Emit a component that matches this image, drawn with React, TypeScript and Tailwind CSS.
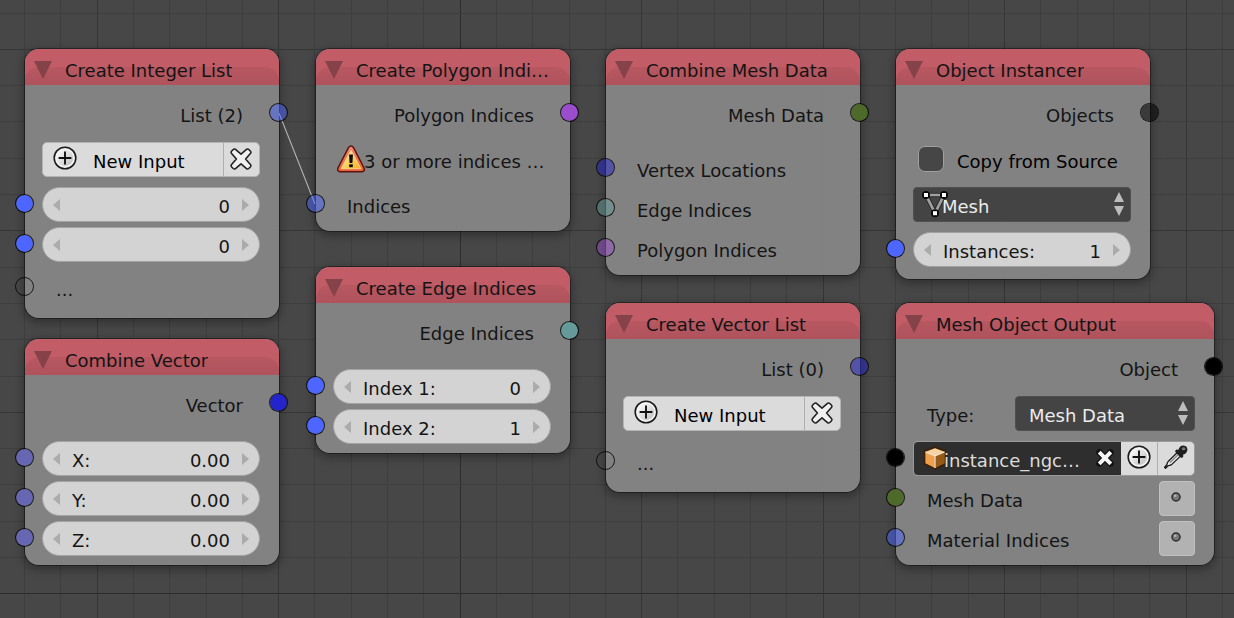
import { useId, useState, type ReactNode } from "react";

/* ---------- icons ---------- */

function PlusIcon() {
  return (
    <svg width="24" height="24" viewBox="0 0 24 24" aria-hidden="true" className="shrink-0">
      <defs>
        <linearGradient id="plus-disc" x1="0" y1="0" x2="1" y2="1">
          <stop offset="0" stopColor="#ffffff" />
          <stop offset="1" stopColor="#bcbcbc" />
        </linearGradient>
      </defs>
      <circle cx="12" cy="12" r="10.8" fill="#f4f4f4" stroke="#1c1c1c" strokeWidth="1.6" />
      <circle cx="12" cy="12" r="8.2" fill="url(#plus-disc)" />
      <path d="M12 5.6V18.4M5.6 12H18.4" stroke="#111" strokeWidth="1.9" fill="none" />
    </svg>
  );
}

function CrossIcon() {
  return (
    <svg width="24" height="24" viewBox="0 0 24 24" aria-hidden="true" className="shrink-0">
      <path
        d="M6.2 2.2 12 7.2 17.8 2.2Q18.8 1.6 19.8 2.5L21.5 4.2Q22.4 5.2 21.6 6.2L16.6 12 21.6 17.8Q22.4 18.8 21.5 19.8L19.8 21.5Q18.8 22.4 17.8 21.8L12 16.8 6.2 21.8Q5.2 22.4 4.2 21.5L2.5 19.8Q1.6 18.8 2.4 17.8L7.4 12 2.4 6.2Q1.6 5.2 2.5 4.2L4.2 2.5Q5.2 1.6 6.2 2.2Z"
        fill="#f0f0f0"
        stroke="#222"
        strokeWidth="1.6"
        strokeLinejoin="round"
      />
    </svg>
  );
}

function SmallCrossIcon() {
  return (
    <svg width="20" height="20" viewBox="0 0 20 20" aria-hidden="true" className="shrink-0">
      <path d="M4.4 4.4 15.6 15.6M15.6 4.4 4.4 15.6" stroke="#111" strokeWidth="6.4" strokeLinecap="round" />
      <path d="M4.2 4.2 15.8 15.8M15.8 4.2 4.2 15.8" stroke="#f4f4f4" strokeWidth="4" />
    </svg>
  );
}

function WarningIcon() {
  return (
    <svg width="30" height="28" viewBox="0 0 30 29" preserveAspectRatio="none" aria-hidden="true" className="shrink-0">
      <defs>
        <linearGradient id="warn-outer" x1="0" y1="0" x2="0" y2="1">
          <stop offset="0" stopColor="#f58a70" />
          <stop offset="1" stopColor="#e8612a" />
        </linearGradient>
        <linearGradient id="warn-inner" x1="0" y1="0" x2="1" y2="1">
          <stop offset="0" stopColor="#fff3a8" />
          <stop offset="1" stopColor="#f2b21e" />
        </linearGradient>
      </defs>
      <path
        d="M12.6 2.6Q15 -0.4 17.4 2.6L28.2 24Q29 27.4 26 27.8H4Q1 27.4 1.8 24Z"
        fill="url(#warn-outer)"
        stroke="#5a1414"
        strokeWidth="1.5"
      />
      <path d="M15 5.6 24.9 24.6H5.1Z" fill="url(#warn-inner)" stroke="#ffd9a0" strokeWidth="0.9" strokeLinejoin="round" />
      <path d="M13 9.8H17L16.4 18.6H13.6Z" fill="#0d0d0d" />
      <rect x="13.2" y="20" width="3.6" height="3" fill="#0d0d0d" />
    </svg>
  );
}

function MeshIcon() {
  return (
    <svg width="28" height="28" viewBox="0 0 28 28" aria-hidden="true" className="shrink-0">
      <path d="M5 5H23L14 23Z" fill="none" stroke="#2a2a2a" strokeWidth="4.6" strokeLinejoin="round" />
      <path d="M5 5H23L14 23Z" fill="none" stroke="#a0a0a0" strokeWidth="2.7" />
      <g fill="#080808">
        <circle cx="5" cy="5" r="4" />
        <circle cx="23" cy="5" r="4" />
        <circle cx="14" cy="23.2" r="4" />
      </g>
      <g fill="#ffffff">
        <rect x="3" y="3" width="4" height="4" />
        <rect x="21" y="3" width="4" height="4" />
        <rect x="12" y="21.2" width="4" height="4" />
      </g>
    </svg>
  );
}

function CubeIcon() {
  return (
    <svg width="24" height="24" viewBox="0 0 24 24" aria-hidden="true" className="shrink-0">
      <path d="M12 1 22.6 5.2V17.8L12 23.2 1.4 17.8V5.2Z" fill="#5a3208" stroke="#3b2007" strokeWidth="1.4" strokeLinejoin="round" />
      <path d="M12 2.2 21.4 5.7 12 9.4 2.6 5.7Z" fill="#f8d3a2" />
      <path d="M2.4 6.2 11.6 9.9V21.8L2.4 17.2Z" fill="#f0a04c" />
      <path d="M12.6 9.9 21.6 6.2V17.2L12.6 21.8Z" fill="#96591a" />
      <path d="M2.4 6 12 9.8 21.6 6M12 9.8V22" fill="none" stroke="#fdebd2" strokeWidth="1.3" />
    </svg>
  );
}

function EyedropperIcon() {
  return (
    <svg width="26" height="26" viewBox="0 0 26 26" aria-hidden="true" className="shrink-0">
      <path
        d="M14.6 8.2 18 11.6 8.6 20.6Q6.6 21.6 5 21.8L2.6 24.2 1.6 23.2 3.8 20.8Q4.2 18.6 5.4 17.2Z"
        fill="#e9e9e9"
        stroke="#1b1b1b"
        strokeWidth="1.3"
        strokeLinejoin="round"
      />
      <path d="M7 18.6 15.6 10.2" stroke="#8c8c8c" strokeWidth="1.5" />
      <path
        d="M12.4 6.4Q13.4 4.8 15.2 6Q17 1.4 20.4 1.6Q24.6 2 24.4 6Q24 9.4 20 10.8Q21 12.6 19.6 13.6Q18.4 14.2 17.4 13.2L12.8 8.6Q11.8 7.6 12.4 6.4Z"
        fill="#1f1f1f"
      />
      <ellipse cx="20.6" cy="4.8" rx="1.9" ry="1.5" fill="#777" />
    </svg>
  );
}

function DotIcon() {
  return (
    <svg width="12" height="12" viewBox="0 0 12 12" aria-hidden="true">
      <circle cx="6" cy="6" r="4" fill="#777" stroke="#2c2c2c" strokeWidth="1.5" />
      <circle cx="5.2" cy="4.8" r="1.3" fill="#b5b5b5" />
    </svg>
  );
}

/* ---------- canvas background ---------- */

const GRID_STEP = 36.3;

function Grid() {
  const columns = Array.from({ length: 72 }, (_, i) => i);
  const tone = (i: number, major: number) => (i % 5 === major ? "#363636" : "#3e3e3e");
  return (
    <svg className="absolute inset-0 h-full w-full" aria-hidden="true" shapeRendering="crispEdges">
      {columns.map((i) => (
        <rect key={`v${i}`} x={Math.round(24 + i * GRID_STEP)} y="0" width="1" height="100%" fill={i === 12 ? "#2c2c2c" : tone(i, 2)} />
      ))}
      {columns.map((i) => (
        <rect key={`h${i}`} x="0" y={Math.floor(13 + i * GRID_STEP)} width="100%" height="1" fill={i === 16 ? "#2c2c2c" : tone(i, 1)} />
      ))}
    </svg>
  );
}

/* ---------- node parts ---------- */

function Socket({ side, color }: { side: "left" | "right"; color: string }) {
  const edge = side === "left" ? "-left-[10px]" : "-right-[9px]";
  return <span className={`absolute top-[7px] z-10 h-[19px] w-[19px] rounded-full border border-black/80 bg-clip-padding ${edge} ${color}`} />;
}

function Node({ title, place, children }: { title: string; place: string; children: ReactNode }) {
  return (
    <section className={`absolute rounded-[14px] bg-[#868686]/95 shadow-[0_0_0_1px_rgba(0,0,0,0.4),0_3px_9px_2px_rgba(0,0,0,0.3)] ${place}`}>
      <header className="relative flex h-9 items-center gap-[13px] overflow-hidden rounded-t-[14px] bg-[#c25c66] pl-[9px]">
        <span className="absolute inset-x-0 bottom-0 h-[18px] rounded-t-[14px] bg-linear-to-b from-black/5 to-black/10" />
        <button type="button" aria-label={`Collapse ${title}`} className="relative mt-1.5">
          <svg width="18" height="18" viewBox="0 0 18 18" aria-hidden="true">
            <path d="M0 0H18L9 18Z" fill="#864249" />
          </svg>
        </button>
        <h2 className="relative truncate pt-2 leading-7">{title}</h2>
      </header>
      {children}
    </section>
  );
}

function Row({ gap, children }: { gap: string; children: ReactNode }) {
  return <div className={`relative flex h-[35px] items-center pr-[19px] pl-[17px] ${gap}`}>{children}</div>;
}

function Output({ label, color }: { label: string; color: string }) {
  return (
    <Row gap="mt-[11px]">
      <span className="grow pt-[5px] pr-[17px] text-right">{label}</span>
      <Socket side="right" color={color} />
    </Row>
  );
}

function Input({ label, color, gap, children }: { label: string; color: string; gap: string; children?: ReactNode }) {
  return (
    <Row gap={gap}>
      <Socket side="left" color={color} />
      <span className="grow pt-[5px] pl-[14px]">{label}</span>
      {children}
    </Row>
  );
}

function NumberField({ label, name, value, color, gap }: { label?: string; name: string; value: string; color: string; gap: string }) {
  const id = useId();
  const [text, setText] = useState(value);
  const step = (delta: number) => {
    const digits = value.includes(".") ? 2 : 0;
    setText((Number(text) + delta).toFixed(digits));
  };
  return (
    <Row gap={gap}>
      <Socket side="left" color={color} />
      <div className="flex h-full min-w-0 grow items-center rounded-full border border-[#a2a2a2] bg-[#d3d3d3] px-[10px]">
        <button type="button" aria-label={`Decrease ${name}`} onClick={() => step(-1)}>
          <svg width="7" height="12" viewBox="0 0 7 12" aria-hidden="true">
            <path d="M7 0V12L0 6Z" fill="#ababab" />
          </svg>
        </button>
        {label && (
          <label htmlFor={id} className="shrink-0 pt-[5px] pl-3">
            {label}
          </label>
        )}
        <input
          id={id}
          type="text"
          inputMode="decimal"
          aria-label={label ? undefined : name}
          value={text}
          onChange={(e) => setText(e.target.value)}
          className="w-0 min-w-0 grow bg-transparent pt-[5px] pr-3 text-right outline-none"
        />
        <button type="button" aria-label={`Increase ${name}`} onClick={() => step(1)}>
          <svg width="7" height="12" viewBox="0 0 7 12" aria-hidden="true">
            <path d="M0 0V12L7 6Z" fill="#ababab" />
          </svg>
        </button>
      </div>
    </Row>
  );
}

function NewInputButtons() {
  return (
    <Row gap="mt-[11px]">
      <div className="flex h-full grow overflow-hidden rounded-[5px] border border-[#b4b4b4] bg-[#dbdbdb] text-black">
        <button type="button" className="flex grow items-center gap-4 pl-[10px]">
          <span className="pb-1">
            <PlusIcon />
          </span>
          <span className="pt-[5px]">New Input</span>
        </button>
        <button type="button" aria-label="Remove input" className="flex w-9 items-center justify-center border-l border-[#aeaeae] pr-0.5 pb-px">
          <CrossIcon />
        </button>
      </div>
    </Row>
  );
}

function Dropdown({ name, options, pad, icon, id }: { name: string; options: string[]; pad: string; icon?: ReactNode; id?: string }) {
  return (
    <div className="relative h-full grow">
      <select
        id={id}
        aria-label={id ? undefined : name}
        className={`h-full w-full appearance-none rounded-[4px] border border-[#505050] bg-[#444444] pt-[5px] text-[#ececec] ${pad}`}
      >
        {options.map((o) => (
          <option key={o}>{o}</option>
        ))}
      </select>
      {icon && <span className="pointer-events-none absolute top-[3px] left-2">{icon}</span>}
      <svg className="pointer-events-none absolute top-[5px] right-[7px]" width="10" height="24" viewBox="0 0 10 24" aria-hidden="true">
        <path d="M5 0 10 10H0ZM0 14H10L5 24Z" fill="#bdbdbd" />
      </svg>
    </div>
  );
}

const INTEGER = "bg-[#4c66ff]";
const INTEGER_LIST = "bg-[#4c66ff]/50";
const FLOAT = "bg-[#6666b3]";
const VECTOR_LIST = "bg-[#2424cc]/50";
const NONE = "bg-transparent";

/* ---------- editor ---------- */

export default function App() {
  const typeId = useId();
  return (
    <main className="relative min-h-screen overflow-hidden bg-[#474747] font-['DejaVu_Sans',sans-serif] text-[18px] leading-7 whitespace-nowrap text-[#141414]">
      <Grid />

      <Node title="Create Integer List" place="left-[25px] top-[49px] w-[254px] pb-[13px]">
        <Output label="List (2)" color={INTEGER_LIST} />
        <NewInputButtons />
        <NumberField name="Item 1" value="0" color={INTEGER} gap="mt-[10px]" />
        <NumberField name="Item 2" value="0" color={INTEGER} gap="mt-[5px]" />
        <Input label="..." color={NONE} gap="mt-2" />
      </Node>

      <Node title="Combine Vector" place="left-[25px] top-[339px] w-[254px] pb-[9px]">
        <Output label="Vector" color="bg-[#2424cc]" />
        <NumberField label="X:" name="X" value="0.00" color={FLOAT} gap="mt-5" />
        <NumberField label="Y:" name="Y" value="0.00" color={FLOAT} gap="mt-[5px]" />
        <NumberField label="Z:" name="Z" value="0.00" color={FLOAT} gap="mt-[5px]" />
      </Node>

      <Node title="Create Polygon Indi…" place="left-[316px] top-[49px] w-[254px] pb-[9px]">
        <Output label="Polygon Indices" color="bg-[#9a4dcc]" />
        <Row gap="mt-[11px]">
          <span className="-mr-[2px] ml-[3px] pb-0.5">
            <WarningIcon />
          </span>
          <span className="relative pt-[5px]">3 or more indices …</span>
        </Row>
        <Input label="Indices" color={INTEGER_LIST} gap="mt-[10px]" />
      </Node>

      <Node title="Create Edge Indices" place="left-[316px] top-[267px] w-[254px] pb-[9px]">
        <Output label="Edge Indices" color="bg-[#66999a]" />
        <NumberField label="Index 1:" name="Index 1" value="0" color={INTEGER} gap="mt-5" />
        <NumberField label="Index 2:" name="Index 2" value="1" color={INTEGER} gap="mt-[5px]" />
      </Node>

      <Node title="Combine Mesh Data" place="left-[606px] top-[49px] w-[254px] pb-[9px]">
        <Output label="Mesh Data" color="bg-[#4d6a2a]" />
        <Input label="Vertex Locations" color={VECTOR_LIST} gap="mt-5" />
        <Input label="Edge Indices" color="bg-[#66999a]/50" gap="mt-[5px]" />
        <Input label="Polygon Indices" color="bg-[#9a4dcc]/50" gap="mt-[5px]" />
      </Node>

      <Node title="Create Vector List" place="left-[606px] top-[303px] w-[254px] pb-[13px]">
        <Output label="List (0)" color={VECTOR_LIST} />
        <NewInputButtons />
        <Input label="..." color={NONE} gap="mt-[13px]" />
      </Node>

      <Node title="Object Instancer" place="left-[896px] top-[49px] w-[254px] pb-3">
        <Output label="Objects" color="bg-black/55" />
        <Row gap="mt-[11px]">
          <label className="flex items-center gap-[13px] pl-[5px] text-black">
            <input
              type="checkbox"
              className="mb-0.5 h-[26px] w-[26px] appearance-none rounded-[7px] border border-[#a0a0a0] bg-[#464646] checked:bg-[#222222]"
            />
            <span className="pt-[5px]">Copy from Source</span>
          </label>
        </Row>
        <Row gap="mt-[10px]">
          <Dropdown name="Object type" options={["Mesh", "Text", "Camera", "Curve"]} pad="pl-7" icon={<MeshIcon />} />
        </Row>
        <NumberField label="Instances:" name="Instances" value="1" color={INTEGER} gap="mt-[10px]" />
      </Node>

      <Node title="Mesh Object Output" place="left-[896px] top-[303px] w-[318px] pb-[9px]">
        <Output label="Object" color="bg-black" />
        <Row gap="mt-[11px]">
          <label htmlFor={typeId} className="w-[102px] shrink-0 pt-[5px] pl-[14px]">
            Type:
          </label>
          <Dropdown id={typeId} name="Type" options={["Mesh Data", "BMesh", "Vertices"]} pad="pl-[13px]" />
        </Row>
        <Row gap="mt-[10px]">
          <Socket side="left" color="bg-black" />
          <div className="flex h-full min-w-0 grow overflow-hidden rounded-[5px] border border-[#9a9a9a] bg-[#dbdbdb]">
            <div className="relative flex min-w-0 grow items-center bg-[#2e2e2e] text-[#dcdcdc]">
              <span className="absolute top-1 left-[9px]">
                <CubeIcon />
              </span>
              <input
                aria-label="Object"
                defaultValue="instance_ngc…"
                className="relative w-0 min-w-0 grow bg-transparent pt-[5px] pl-[30px] outline-none"
              />
              <button type="button" aria-label="Clear object" className="mr-1 px-0.5 pb-0.5">
                <SmallCrossIcon />
              </button>
            </div>
            <button type="button" aria-label="New object" className="flex w-9 shrink-0 items-center justify-center pb-1">
              <PlusIcon />
            </button>
            <button type="button" aria-label="Pick object" className="flex w-[37px] shrink-0 items-center justify-center border-l border-[#aeaeae] pb-1">
              <EyedropperIcon />
            </button>
          </div>
        </Row>
        <Input label="Mesh Data" color="bg-[#4d6a2a]" gap="mt-[5px]">
          <button type="button" aria-label="Mesh Data options" className="flex h-full w-9 items-center justify-center rounded-[4px] border border-[#c0c0c0] bg-[#b2b2b2] pr-0.5 pb-1">
            <DotIcon />
          </button>
        </Input>
        <Input label="Material Indices" color={INTEGER_LIST} gap="mt-[5px]">
          <button type="button" aria-label="Material Indices options" className="flex h-full w-9 items-center justify-center rounded-[4px] border border-[#c0c0c0] bg-[#b2b2b2] pr-0.5 pb-1">
            <DotIcon />
          </button>
        </Input>
      </Node>

      <svg className="pointer-events-none absolute top-[113px] left-[279px]" width="37" height="92" viewBox="0 0 37 92" aria-hidden="true">
        <path d="M0 0 36 91" stroke="#b4b4b4" strokeWidth="1.1" fill="none" />
      </svg>
    </main>
  );
}
